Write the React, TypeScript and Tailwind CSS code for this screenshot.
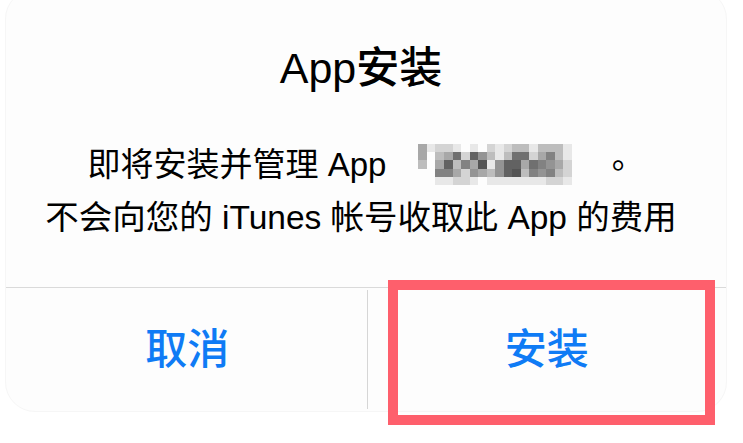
import React from "react";

const GRAYS: Record<string, string> = {
    f: "#fdfdfd",
    e: "#e8e8e8",
    d: "#d4d4d4",
    c: "#bdbdbd",
    b: "#a8a8a8",
    a: "#949494",
    "9": "#828282",
    "8": "#707070",
    "7": "#626262",
    "6": "#545454",
};

// pixelated (mosaic) app name
const MOSAIC = [
    "beddefefdedccecccef",
    "bfcb8d7acec88db9cef",
    "cfb7c9b6ea77b89abdf",
    "ff99bdabca76c9a9cdf",
    "ffeeddefeeeeeeeddef",
];

function Mosaic() {
    return (
        <div className="grid grid-cols-[repeat(19,1fr)] grid-rows-5 w-[162px] h-[42px]">
            {MOSAIC.flatMap((row, r) =>
                row.split("").map((ch, c) => (
                    <div key={`${r}-${c}`} style={{ backgroundColor: GRAYS[ch] }} />
                ))
            )}
        </div>
    );
}

export default function App() {
    return (
        <div
            className="relative w-[743px] h-[443px] bg-white overflow-hidden"
            style={{ fontFamily: '"Liberation Sans", "Noto Sans CJK SC", sans-serif' }}
        >
            {/* Dialog */}
            <div className="ml-[5px] mt-[-11px] w-[722px] h-[423px] rounded-[30px] bg-[#fdfdfd] border border-[#f6f6f6] flex flex-col">
                <div className="h-[297px] flex flex-col items-center pr-[10px] text-black">
                    <p className="mt-[57px] text-[43px] leading-[43px] font-medium">App安装</p>
                    <div className="mt-[48px] flex items-center text-[33px] leading-[53px]">
                        <span>即将安装并管理 App</span>
                        <span className="ml-[32px]">
                            <Mosaic />
                        </span>
                        <span className="ml-[21px] font-['Noto_Sans_CJK_TC']">。</span>
                    </div>
                    <p className="text-[33.5px] leading-[53px]">不会向您的 iTunes 帐号收取此 App 的费用</p>
                </div>
                <div className="h-px bg-[#dadada]" />
                <div className="flex flex-1 text-[42px] font-medium text-[#0f7bf5]">
                    <button className="flex-1 flex items-center justify-center pl-[2px]">取消</button>
                    <div className="w-px my-[2px] bg-[#d6d6d6]" />
                    <button className="flex-1 flex items-center justify-center">安装</button>
                </div>
            </div>

            {/* highlight annotation */}
            <div className="absolute left-[388px] top-[280px] w-[327px] h-[145px] border-[10px] border-[#fe5f6c]" />
        </div>
    );
}
